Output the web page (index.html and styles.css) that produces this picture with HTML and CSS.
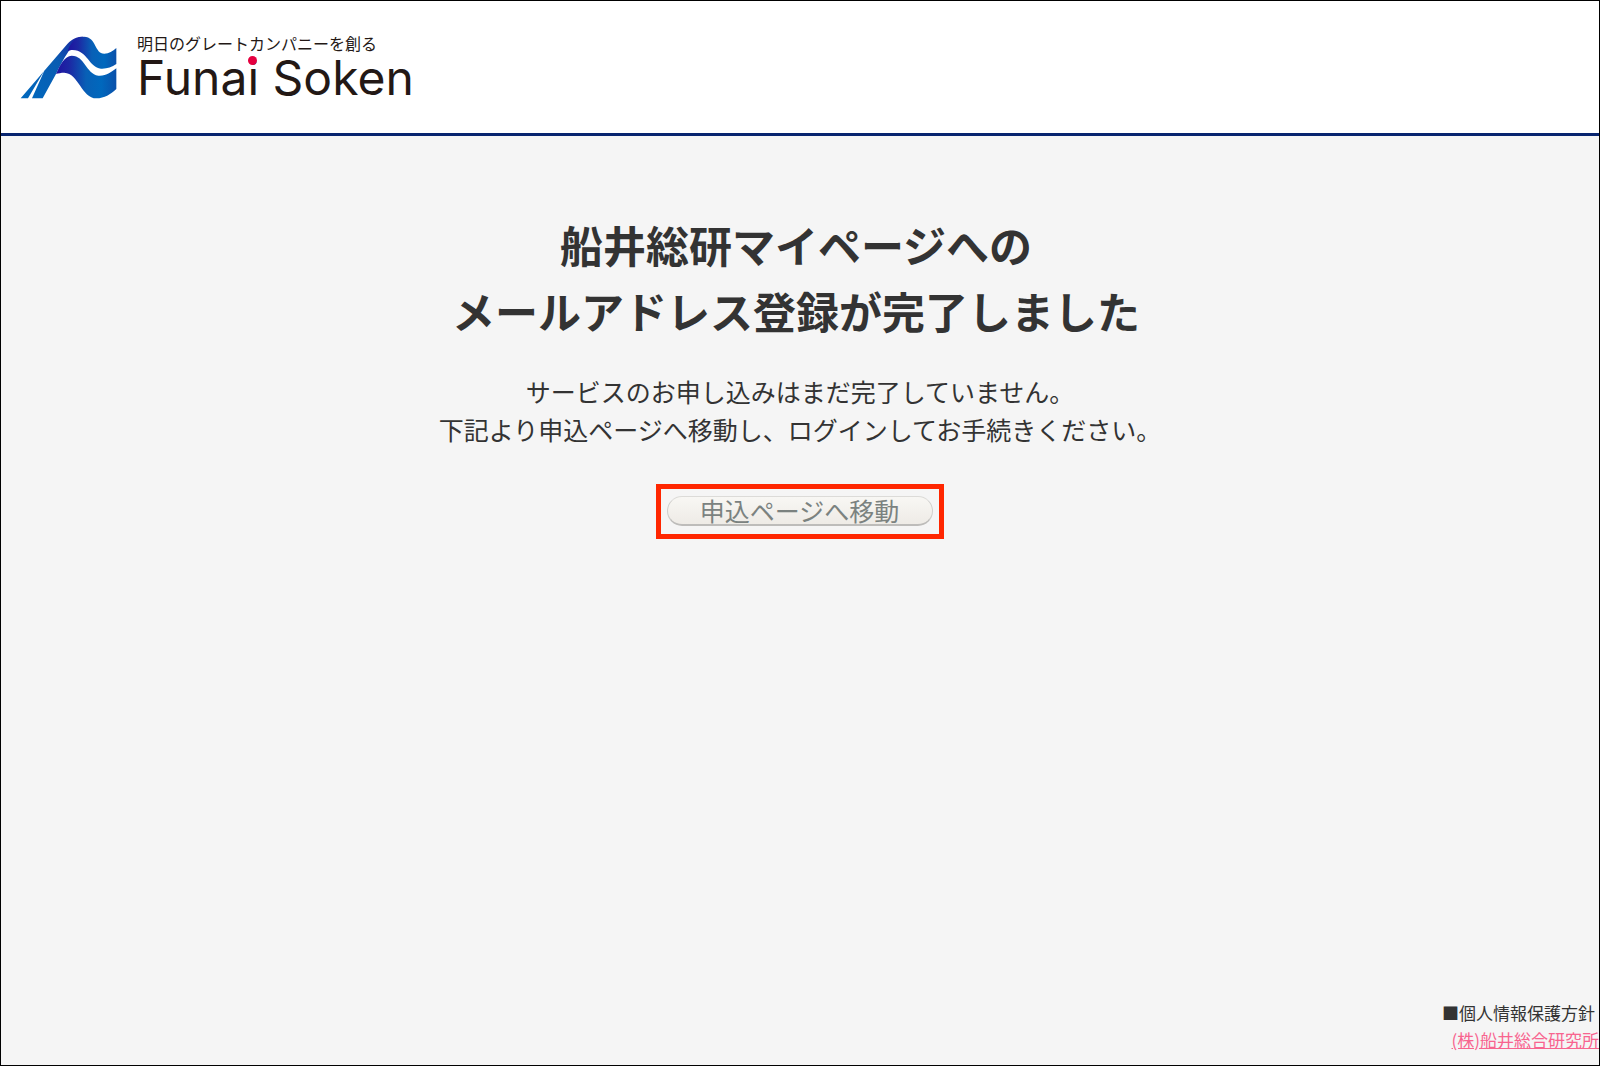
FILE: index.html
```html
<!DOCTYPE html>
<html lang="ja">
<head>
<meta charset="utf-8">
<meta name="viewport" content="width=device-width, initial-scale=1">
<title>船井総研マイページ</title>
<link rel="stylesheet" href="styles.css">
</head>
<body>
<div class="page">
  <header class="header">
    <div class="logo">
      <svg class="logo-mark" viewBox="60 48 291 189" aria-hidden="true">
        <defs>
          <linearGradient id="wave" x1="0" x2="1" y1="0" y2="0">
            <stop offset="0" stop-color="#1f12a0"/>
            <stop offset="0.22" stop-color="#1c28a4"/>
            <stop offset="0.5" stop-color="#0860b6"/>
            <stop offset="0.75" stop-color="#0068bd"/>
            <stop offset="1" stop-color="#0a50aa"/>
          </linearGradient>
          <linearGradient id="leg" x1="0" x2="1" y1="1" y2="0">
            <stop offset="0" stop-color="#0068bd"/>
            <stop offset="0.6" stop-color="#0a5cb2"/>
            <stop offset="1" stop-color="#1c1ba0"/>
          </linearGradient>
        </defs>
        <path fill="url(#leg)" d="M62 235 L202 72 C218 54 232 50 250 50 C228 62 216 78 203 98 C190 118 178 140 168 162 L128 235 H96 L134 150 L84 235 Z"/>
        <path fill="url(#wave)" d="M203 94 C211 68 226 50 252 50 C290 51 283 101 313 101 C327 101 338 94 349 84 V132 C335 141 320 147 303 146 C267 143 263 91 218 90 C211 90 207 92 203 94 Z"/>
        <path fill="url(#wave)" d="M168 162 C180 134 194 108 215 107 C255 107 257 160 295 167 C317 169 335 156 349 145 V207 C331 223 314 235 289 235 C245 235 236 160 193 158 C183 158 175 160 168 162 Z"/>
      </svg>
      <div class="logo-text">
        <span class="tagline">明日のグレートカンパニーを創る</span>
        <span class="brand">Funa<span class="brand-i">i</span> Soken</span>
      </div>
    </div>
  </header>
  <main class="main">
    <h1 class="title">船井総研マイページへの<br>メールアドレス登録が完了しました</h1>
    <p class="message">サービスのお申し込みはまだ完了していません。<br>下記より申込ページへ移動し、ログインしてお手続きください。</p>
    <div class="highlight"><button type="button" class="move">申込ページへ移動</button></div>
  </main>
  <footer class="footer">
    <span class="policy">■個人情報保護方針</span>
    <a class="company" href="#">(株)船井総合研究所</a>
  </footer>
</div>
</body>
</html>
```
FILE: styles.css
```css
* { box-sizing: border-box; }

body {
  margin: 0;
  background: #f5f5f5;
  color: #333;
  font-family: "Noto Sans CJK JP", sans-serif;
}

.page {
  display: flex;
  flex-direction: column;
  min-height: 100vh;
  border: 1px solid #000;
}

.header {
  padding: 35px 19px 32px;
  background: #fff;
  border-bottom: 3px solid #07246f;
}

.logo { display: flex; gap: 20px; }

.logo-mark { flex: none; width: 97px; height: 63px; }

.logo-text {
  display: flex;
  flex-direction: column;
  gap: 4px;
  color: #231815;
  white-space: nowrap;
}

.tagline { font-size: 16px; line-height: 14px; }

.brand {
  font-family: Inter, sans-serif;
  font-size: 48px;
  font-weight: 400;
  line-height: 47px;
}

.brand-i { position: relative; }

.brand-i::before {
  content: "";
  position: absolute;
  top: 8px;
  left: 1px;
  width: 9px;
  height: 9px;
  border-radius: 50%;
  background: #e5003f;
}

.main {
  display: flex;
  flex: 1;
  flex-direction: column;
  align-items: center;
  padding-top: 75px;
  text-align: center;
}

.title {
  margin: 0 0 29px;
  padding-right: 8px;
  font-size: 43px;
  line-height: 66px;
}

.message {
  margin: 0 0 36px;
  font-size: 25px;
  line-height: 38px;
}

.highlight {
  display: flex;
  padding: 7px 6px 8px;
  border: 5px solid #ff2600;
}

.move {
  padding: 0 33px 1px 32px;
  border: 1px solid;
  border-width: 1px 1px 2px;
  border-color: #dcdbd8 #d0cfcc #bdbcba;
  border-radius: 15px;
  background: linear-gradient(#f8f7f4, #eeebe6);
  color: #7b8280;
  font-family: inherit;
  font-size: 25px;
  line-height: 26px;
  cursor: pointer;
}

.footer {
  display: flex;
  flex-direction: column;
  align-items: flex-end;
  padding-bottom: 12px;
  font-size: 17px;
  line-height: 27px;
}

.policy { padding-right: 4px; }

.company { color: #f8648f; }
```
